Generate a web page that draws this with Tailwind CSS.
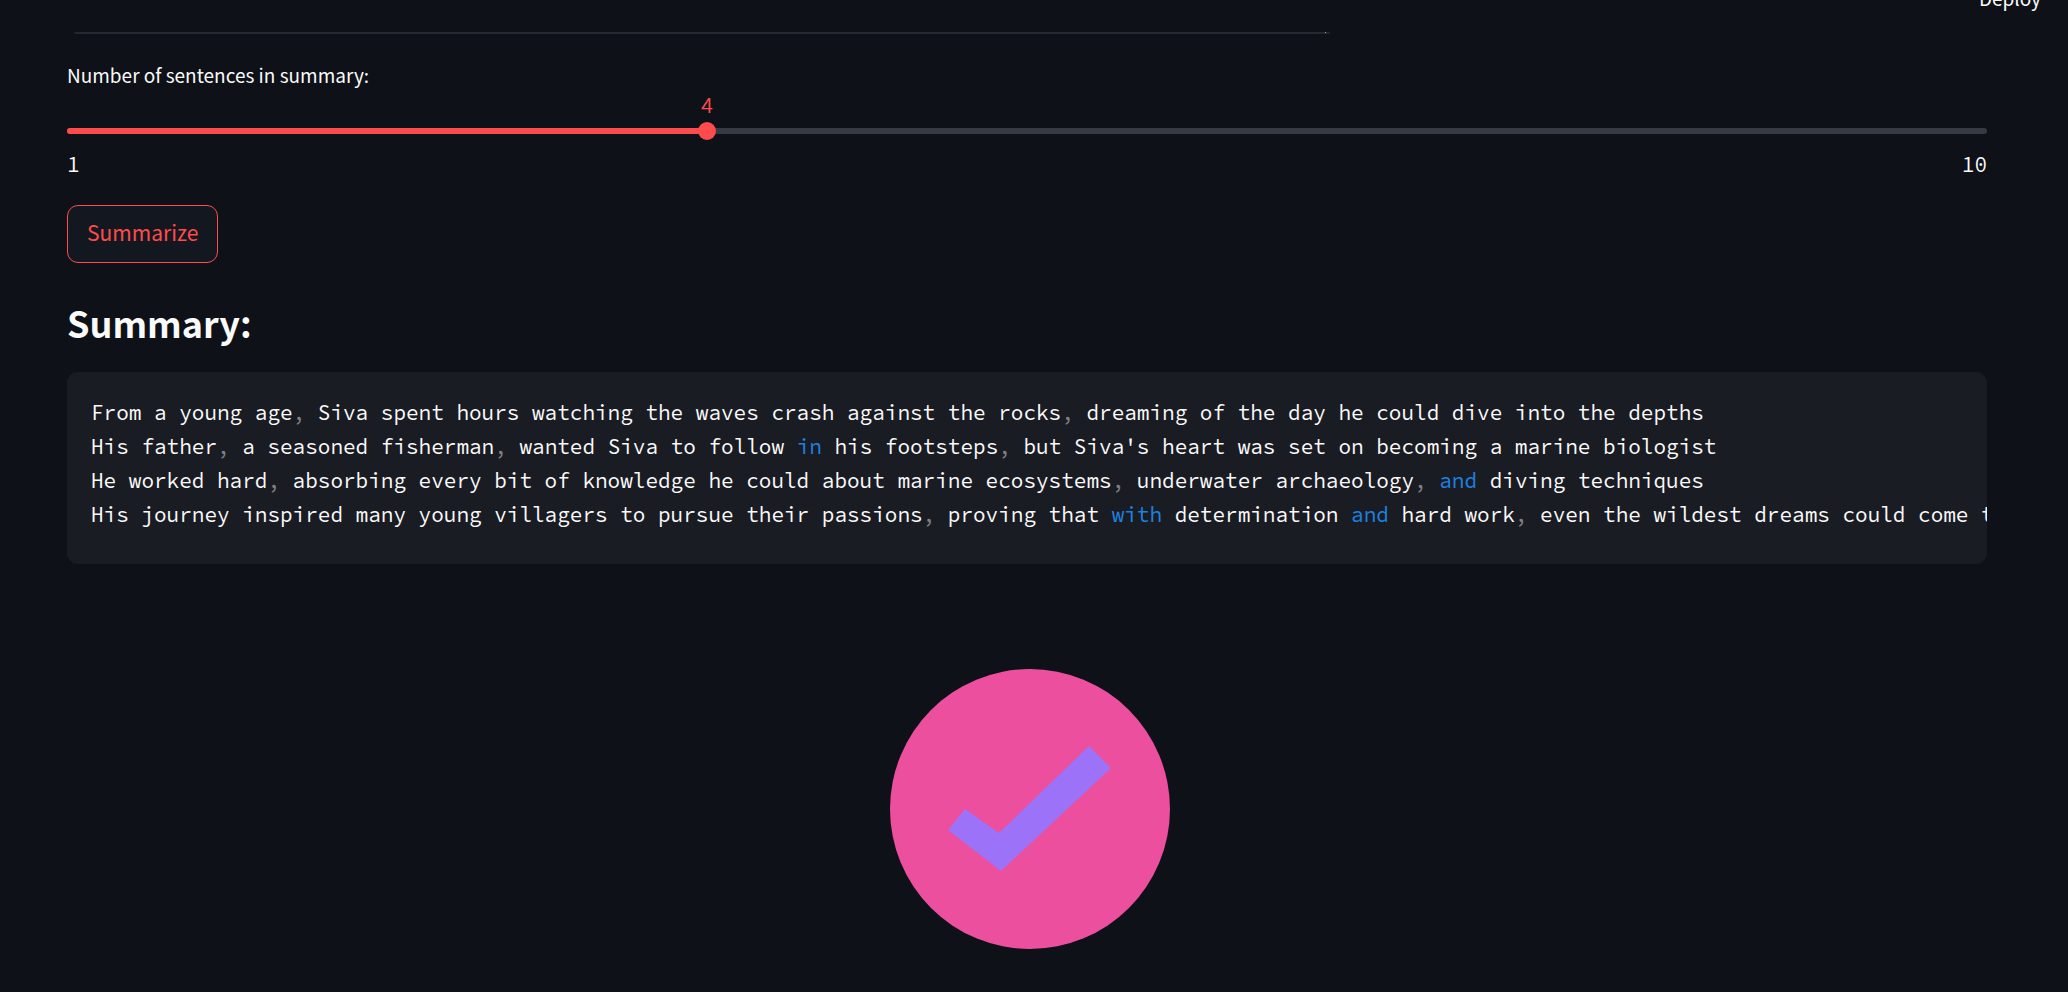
<!DOCTYPE html>
<html lang="en">
<head>
<meta charset="utf-8">
<title>Text Summarizer</title>
<script src="https://cdn.jsdelivr.net/npm/@tailwindcss/browser@4"></script>
</head>
<body class="min-h-screen overflow-x-hidden bg-[#0e1117] font-['Source_Sans_Pro','Noto_Sans_CJK_SC',sans-serif] text-[#fafafa]">
<header class="flex h-[12px] items-end justify-end overflow-hidden pr-[27px]">
  <a href="#" class="text-[19px] leading-[28px]">Deploy</a>
</header>
<main class="flex flex-col pl-[67px] pr-[81px] pt-5">
  <!-- lower edge of the article text box -->
  <div class="ml-[7px] flex h-[2px] w-[65.4%] justify-end rounded-b-sm bg-[#262730] pr-1"><span class="size-px bg-[#a0a0a5]"></span></div>

  <section class="mt-[27px]">
    <label for="count" class="block text-[19px] leading-[28px]">Number of sentences in summary:</label>
    <div class="relative mt-[39px] h-[6px] rounded-full bg-[#373a43]">
      <div class="h-full rounded-full bg-[#ff4b4b]" style="width:33.333%"></div>
      <output for="count" class="absolute bottom-[14px] -translate-x-1/2 font-['Source_Code_Pro','Liberation_Mono',monospace] text-[21px] leading-[28px] text-[#ff4b4b]" style="left:33.333%">4</output>
      <input id="count" type="range" min="1" max="10" value="4" class="absolute -left-[9px] -top-[6px] m-0 h-[18px] w-[calc(100%+18px)] appearance-none bg-transparent [&::-webkit-slider-thumb]:size-[18px] [&::-webkit-slider-thumb]:appearance-none [&::-webkit-slider-thumb]:rounded-full [&::-webkit-slider-thumb]:bg-[#ff4b4b]">
    </div>
    <div class="mt-[17px] flex justify-between font-['Source_Code_Pro','Liberation_Mono',monospace] text-[21px] leading-[28px]"><span>1</span><span>10</span></div>
  </section>

  <button type="button" class="mt-[26px] h-[58px] self-start rounded-[11px] border border-[#ff4b4b] bg-[#131720] px-[19px] pb-1 text-[21px] leading-[32px] text-[#ff4b4b]">Summarize</button>

  <h2 class="mt-[34px] text-[36px] font-bold leading-[50px]">Summary:</h2>

  <pre class="mt-[25px] overflow-hidden rounded-[11px] bg-[#1a1c24] px-6 pb-8 pt-6 font-['Source_Code_Pro','Liberation_Mono',monospace] text-[21px] leading-[34px]"><code class="font-['Source_Code_Pro','Liberation_Mono',monospace] text-[21px]">From a young age<span class="text-[#808080]">,</span> Siva spent hours watching the waves crash against the rocks<span class="text-[#808080]">,</span> dreaming of the day he could dive into the depths
His father<span class="text-[#808080]">,</span> a seasoned fisherman<span class="text-[#808080]">,</span> wanted Siva to follow <span class="text-[#1c83e1]">in</span> his footsteps<span class="text-[#808080]">,</span> but Siva's heart was set on becoming a marine biologist
He worked hard<span class="text-[#808080]">,</span> absorbing every bit of knowledge he could about marine ecosystems<span class="text-[#808080]">,</span> underwater archaeology<span class="text-[#808080]">,</span> <span class="text-[#1c83e1]">and</span> diving techniques
His journey inspired many young villagers to pursue their passions<span class="text-[#808080]">,</span> proving that <span class="text-[#1c83e1]">with</span> determination <span class="text-[#1c83e1]">and</span> hard work<span class="text-[#808080]">,</span> even the wildest dreams could come true</code></pre>

  <svg class="ml-[6px] mt-[105px] size-[280px] self-center" viewBox="0 0 280 280" role="img" aria-label="Done">
    <circle cx="140" cy="140" r="140" fill="#ec4f9d"/>
    <path d="M58 161 75 140 109 164 199 77 221 99 111 202Z" fill="#9c73f8"/>
  </svg>
</main>
</body>
</html>
